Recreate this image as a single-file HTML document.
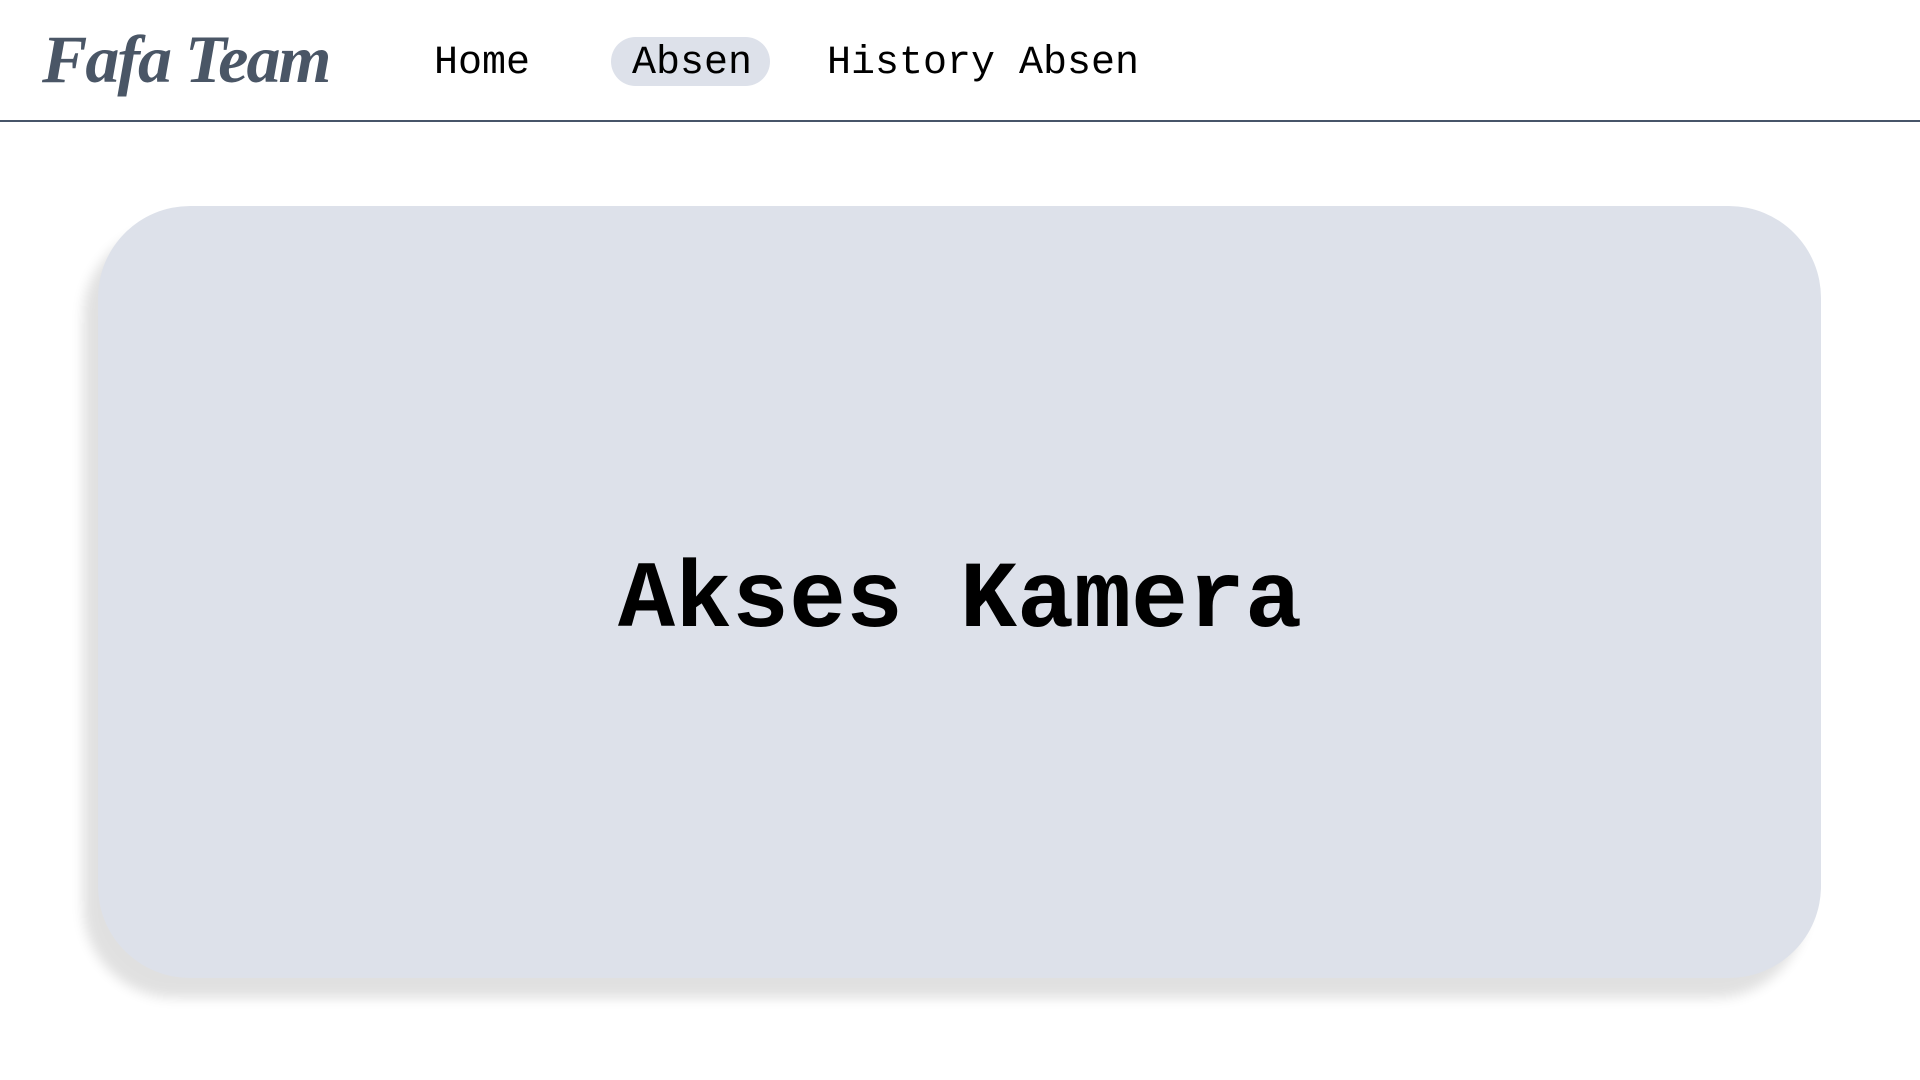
<!DOCTYPE html>
<html><head><style>
html,body{margin:0;padding:0;width:1920px;height:1080px;background:#fff;overflow:hidden;font-family:"Liberation Mono",monospace;}
.hdr{position:absolute;left:0;top:0;width:1920px;height:120px;border-bottom:2px solid #475569;}
.logo{position:absolute;left:42px;top:20px;font-family:"Liberation Serif",serif;font-style:italic;font-weight:bold;font-size:68px;color:#4a5666;letter-spacing:-2px;}
.nav{position:absolute;top:39px;font-size:40px;color:#000;line-height:50px;}
.pill{position:absolute;left:611px;top:37px;width:159px;height:49px;border-radius:25px;background:#dde1ea;}
.card{position:absolute;left:98px;top:206px;width:1723px;height:772px;background:#dde1ea;border-radius:92px;box-shadow:-15px 20px 12px rgba(0,0,0,0.12);}
.t{position:absolute;left:0;right:0;top:546px;text-align:center;font-size:95px;font-weight:bold;color:#000;line-height:110px;}
</style></head><body>
<div class="hdr">
<div class="logo">Fafa Team</div>
<div class="pill"></div>
<div class="nav" style="left:434px">Home</div>
<div class="nav" style="left:632px">Absen</div>
<div class="nav" style="left:827px">History Absen</div>
</div>
<div class="card"></div>
<div class="t">Akses Kamera</div>
</body></html>
